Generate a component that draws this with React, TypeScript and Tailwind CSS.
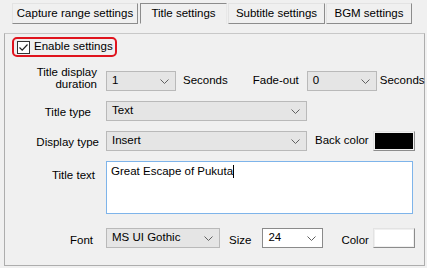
import React from 'react';

const Chevron = () => (
  <svg width="9" height="5" viewBox="0 0 9 5" className="shrink-0">
    <path d="M0.5 0.5 L4.5 4.5 L8.5 0.5" fill="none" stroke="#606060" strokeWidth="1" />
  </svg>
);

function Combo({ value, className = '', white = false }: { value: string; className?: string; white?: boolean }) {
  return (
    <div
      className={`flex items-center justify-between h-[20px] pl-[5px] pr-[6px] border shrink-0 ${
        white ? 'bg-white border-[#8a8a8a]' : 'bg-[#e5e5e5] border-[#b9b9b9]'
      } ${className}`}
    >
      <span className="leading-none">{value}</span>
      <Chevron />
    </div>
  );
}

function Tab({ label, active = false, className = '' }: { label: string; active?: boolean; className?: string }) {
  return (
    <div
      className={`h-[21px] flex items-center justify-center border whitespace-nowrap ${
        active
          ? 'border-t-[#8c8c8c] border-l-[#8c8c8c] border-r-[#e8e8e8] border-b-[#f0f0f0] bg-[#f0f0f0]'
          : 'border-t-[#e3e3e3] border-l-[#e3e3e3] border-r-[#8c8c8c] border-b-[#8c8c8c] bg-[#f0f0f0]'
      } ${className}`}
    >
      {label}
    </div>
  );
}

function ColorButton({ fill }: { fill: string }) {
  return (
    <div className="w-[42px] h-[20px] border border-t-[#e3e3e3] border-l-[#e3e3e3] border-r-[#8c8c8c] border-b-[#8c8c8c] p-[1px] bg-[#f0f0f0] shrink-0">
      <div className={`w-full h-full ${fill}`} />
    </div>
  );
}

export default function App() {
  return (
    <div className="w-[427px] h-[268px] bg-[#f0f0f0] overflow-hidden text-[11.5px] text-black whitespace-nowrap font-['Liberation_Sans',Arial,sans-serif]">
      {/* tab buttons */}
      <div className="flex pt-[3px] pl-[12px]">
        <Tab label="Capture range settings" className="w-[126px]" />
        <Tab label="Title settings" active className="w-[87px] ml-[2px]" />
        <Tab label="Subtitle settings" className="w-[97px] ml-[1px]" />
        <Tab label="BGM settings" className="w-[86px] ml-[1px]" />
      </div>

      <div className="mt-[9px] ml-[4px] w-[421px] h-[233px] border border-[#adadad] border-t-[#c8c8c8]">
        {/* enable */}
        <div className="mt-[3px] ml-[7px] w-[105px] h-[20px] border-2 border-[#e0141e] rounded-[5px] flex items-center pl-[3px]">
          <div className="w-[13px] h-[13px] border border-[#333] bg-white flex items-center justify-center shrink-0">
            <svg width="11" height="11" viewBox="0 0 11 11">
              <path d="M1.5 5.5 L4.2 8.2 L9.5 2.5" fill="none" stroke="#222" strokeWidth="1.2" />
            </svg>
          </div>
          <span className="ml-[4px] leading-none">Enable settings</span>
        </div>

        {/* duration row */}
        <div className="flex items-center h-[20px] mt-[14px]">
          <div className="w-[96px] pr-[4px] text-right leading-[12px] -mt-[6px] shrink-0">
            Title display
            <br />
            duration
          </div>
          <Combo value="1" className="ml-[5px] w-[70px]" />
          <span className="ml-[7px]">Seconds</span>
          <span className="ml-[25px]">Fade-out</span>
          <Combo value="0" className="ml-[8px] w-[70px]" />
          <span className="ml-[3px]">Seconds</span>
        </div>

        {/* title type */}
        <div className="flex items-center h-[20px] mt-[10px]">
          <div className="w-[96px] pr-[10px] text-right shrink-0 mt-[3px]">Title type</div>
          <Combo value="Text" className="ml-[5px] w-[201px]" />
        </div>

        {/* display type */}
        <div className="flex items-center h-[20px] mt-[10px]">
          <div className="w-[96px] pr-[2px] text-right shrink-0 mt-[3px]">Display type</div>
          <Combo value="Insert" className="ml-[5px] w-[201px]" />
          <span className="ml-[8px]">Back color</span>
          <div className="ml-[4px]">
            <ColorButton fill="bg-black" />
          </div>
        </div>

        {/* title text */}
        <div className="flex items-start mt-[10px]">
          <div className="w-[96px] pr-[6px] text-right shrink-0 mt-[6px]">Title text</div>
          <div className="ml-[5px] w-[307px] h-[53px] bg-white border border-[#7eb4ea] pl-[4px] pt-[4px] leading-none flex items-start">
            <span>Great Escape of Pukuta</span>
            <span className="inline-block w-[1px] h-[13px] bg-black -mt-[1px]" />
          </div>
        </div>

        {/* font row */}
        <div className="flex items-center h-[20px] mt-[14px]">
          <div className="w-[96px] pr-[8px] text-right shrink-0 mt-[6px]">Font</div>
          <Combo value="MS UI Gothic" className="ml-[5px] w-[114px]" />
          <span className="ml-[9px] mt-[6px]">Size</span>
          <Combo value="24" white className="ml-[11px] w-[61px]" />
          <span className="ml-[18px] mt-[6px]">Color</span>
          <div className="ml-[4px]">
            <ColorButton fill="bg-white" />
          </div>
        </div>
      </div>
    </div>
  );
}
